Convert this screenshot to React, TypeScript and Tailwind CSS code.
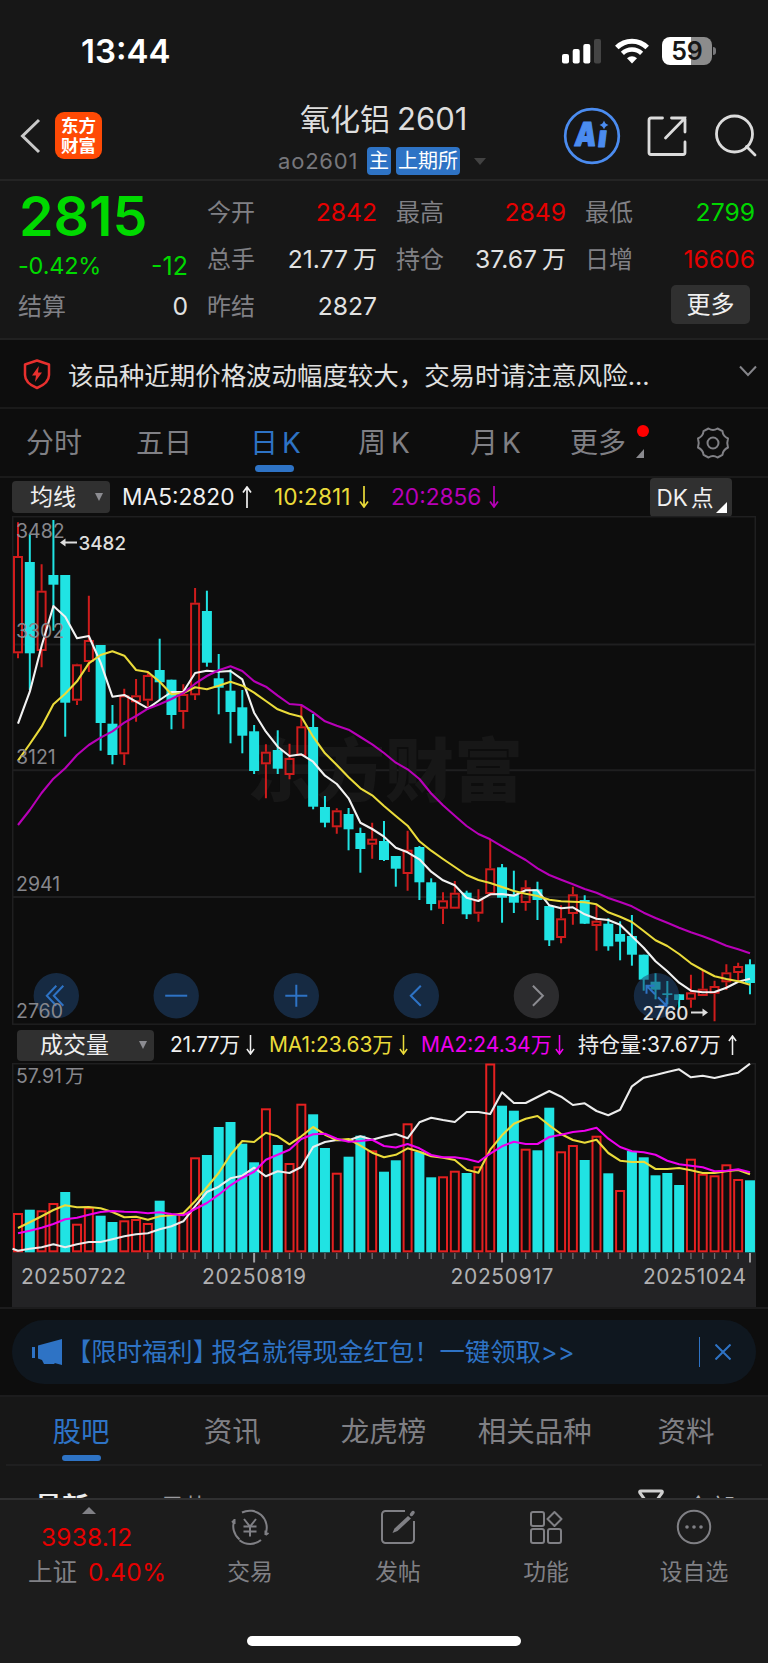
import type { ReactNode } from "react";
import { clsx } from "clsx";

// [rising, high, bodyTop, bodyBottom, low]
type Candle = [number, number, number, number, number];

const STEP = 11.806;
const FIRST_X = 6;
const VOLUME_BASE = 189.3;

const candles: Candle[] = [
  [1, 6.3, 40, 137.3, 142.3], [0, 18, 46, 137.3, 174], [1, 48.3, 74.7, 135, 151.3], [0, 4, 59, 68.7, 114.7],
  [0, 59, 59, 186.7, 220.7], [1, 147.7, 148.3, 184.7, 189], [1, 79.7, 124, 146, 156], [0, 129, 129, 207, 234.7],
  [0, 189, 207.7, 239, 248.3], [1, 172.7, 179.3, 238.3, 249], [1, 163, 179.3, 186.3, 205.7], [1, 155.7, 159, 184.7, 190.7],
  [0, 122.7, 154, 166.3, 184], [0, 163.7, 163.7, 199, 213.3], [1, 168.3, 178, 196, 212.7], [1, 72, 86.7, 179.3, 184],
  [0, 74.7, 95, 146.7, 150.7], [0, 138, 162.3, 171.7, 198.3], [0, 153.3, 174.7, 196, 227.3], [0, 174, 191.3, 219.7, 237.3],
  [0, 209, 215.3, 255, 258], [1, 228.3, 235.7, 248.3, 282.3], [0, 214.3, 234, 252.7, 258], [1, 227.7, 242, 259, 263.3],
  [1, 190, 210.3, 240, 240], [0, 198, 211, 290.7, 293.3], [0, 280, 291, 306.7, 311.3], [1, 292.3, 294.3, 311.3, 317.7],
  [0, 292, 298, 313.3, 334.3], [0, 311.7, 317, 333, 356.7], [1, 306.7, 322.7, 328.7, 342.7], [0, 305, 325, 344, 345],
  [0, 340, 340, 352.7, 370.7], [1, 314.7, 333.7, 358, 374.7], [0, 330, 331, 366.3, 384], [0, 362.3, 366.3, 388, 394.3],
  [1, 376.3, 384.3, 392.7, 408], [1, 365, 376.7, 392.7, 392.7], [0, 374.7, 376.7, 398.3, 403], [1, 373.3, 383.3, 397.7, 405.7],
  [1, 324, 352.3, 378, 379.7], [0, 348, 351.3, 381.7, 406.7], [0, 354.7, 378.3, 386.7, 397], [1, 364.3, 371.3, 387, 394.7],
  [0, 365.7, 373.3, 384, 404], [0, 389, 390, 424.3, 430], [1, 389.3, 402.3, 422, 427.3], [1, 370.7, 378.3, 398, 408.7],
  [0, 379.3, 384, 407.7, 408], [1, 388, 404.7, 410, 434.7], [0, 402.3, 407.7, 430.3, 434.7], [0, 405.3, 418, 425.7, 444.3],
  [0, 399, 420, 438.7, 449.7], [0, 438.7, 438.7, 463.7, 474.7], [0, 457.3, 465.7, 473.7, 483.3], [0, 465, 477.3, 479, 488.3],
  [0, 478.3, 478.3, 484, 493], [1, 458.7, 476.3, 483.7, 491.7], [1, 454.7, 472.7, 480, 480], [1, 464.7, 470, 477.7, 505.3],
  [1, 448.3, 456.3, 466.3, 474], [1, 446.7, 450, 457, 465], [0, 443.3, 448.3, 467, 478.3],
];

const ma5 = [
  207.7, 175.7, 130, 90, 100.7, 122.3, 120, 146.7, 180.7, 179, 185.7, 192.3, 184, 176, 175.7, 157, 154.7, 155.7, 155, 163.3,
  196.7, 215.7, 230.7, 240, 238.3, 245.7, 259.7, 268, 282.3, 306.7, 313, 320.7, 331.7, 336.3, 343.3, 355.7, 364.3, 369.3,
  381.7, 385, 378.3, 378, 379.7, 374.3, 374.3, 389.3, 392.3, 391.3, 398.3, 402.7, 404, 408.7, 420.3, 431.7, 445.3, 455.3,
  466.7, 474.7, 476.3, 476, 471.7, 465.7, 462.7,
];
const ma10 = [
  244.7, 228, 210.7, 188.3, 177.7, 165.3, 147.3, 139, 135.3, 139.7, 154, 156, 165.7, 178.3, 177, 171.3, 173.3, 169.7, 165.7,
  169.7, 176.7, 185, 193.3, 197.7, 200.7, 220.7, 237.3, 249, 261.3, 272.3, 279.3, 290, 300, 309.7, 325.3, 334.7, 343, 351,
  359, 364, 367, 371, 375, 377.7, 380, 383.7, 385.3, 385.7, 386.3, 388.3, 396.3, 400.7, 406, 415, 424.3, 430, 438, 447.3,
  454, 460.3, 463, 465.3, 468.7,
];
const ma20 = [
  309, 294, 277, 262.7, 252.3, 239, 229, 221.7, 215.3, 206.7, 200, 192.7, 188.3, 183, 177, 167.7, 160, 154.3, 150.3, 155,
  165.3, 170.7, 179.7, 188, 189, 196.3, 205.3, 209.7, 213.7, 221, 228.3, 237, 246.7, 253.3, 263, 277.5, 289.3, 299.7, 310,
  318, 323.3, 330.3, 337.3, 344, 352.3, 359, 363.7, 368.3, 373, 376.7, 382, 386, 390.3, 396.7, 402, 406.7, 411.7, 416.3,
  420.3, 424.7, 429.7, 433.3, 437.3,
];

const volumeTops = [
  150, 146.7, 147.3, 140, 129, 160.7, 144.3, 152.7, 159, 157.3, 156, 160, 137.7, 151.7, 150, 94.3, 92, 64, 59, 80.7, 99.3,
  45.3, 82, 100, 40.7, 51.3, 85, 109.7, 93.7, 72.7, 87.3, 108.7, 97.3, 60.3, 88.7, 114.3, 113.3, 107.7, 110, 103.3, 0.5,
  42.7, 47.7, 85.7, 87.3, 44.7, 88.3, 82, 97, 72.7, 110.3, 127, 88, 94.3, 112.3, 110, 122, 95.7, 110.7, 112.3, 101.3, 116,
  117.3,
];
const flatDays = [3, 51];

const volMa1 = [
  165, 159.3, 153.3, 147, 142.3, 144.3, 144, 145.3, 149, 154.3, 153.7, 156.7, 153.3, 152.3, 150.3, 138.3, 124.3, 110, 91.7,
  78, 79, 69.7, 73.3, 81.3, 73.3, 64, 71.7, 77, 76, 82.7, 89.7, 94.3, 91.8, 85.3, 88.7, 93.3, 94.7, 97, 106.7, 109.7, 86.7,
  72.3, 60.7, 55.7, 53, 62.3, 71, 77, 79.7, 76.7, 90, 97.7, 99, 98.7, 106, 106, 105, 107.3, 110, 110, 108.3, 107, 111.3,
];
const volMa2 = [
  170.3, 167.7, 164.7, 161, 156.3, 154.7, 151.7, 149, 148, 148.7, 149, 150.3, 149.3, 151, 152.3, 146, 140, 131.7, 122.3,
  114.7, 108.7, 96.7, 91.7, 86.7, 76, 71.3, 70.7, 75.7, 78.7, 78, 76.7, 83, 84.5, 81, 85.3, 92, 94.3, 94.3, 96, 99, 90.7,
  83.3, 78.7, 81, 81, 74, 71.7, 69, 67.7, 64.7, 75.7, 84, 88.3, 89.3, 91.7, 97.7, 101.3, 102.7, 104.3, 108.3, 107.7, 106.3,
  109.3,
];
const openInterest = [
  187.7, 185.7, 184.3, 181.3, 184.3, 181.3, 179, 179, 176.3, 173.3, 171.3, 170.3, 166.3, 163.3, 158.3, 143.3, 129, 123.7,
  115.3, 112.7, 104.7, 113.3, 108.3, 110, 104, 84, 79, 77, 77.3, 73.3, 76.7, 73.5, 71, 75.3, 59.3, 54.7, 57, 59, 49, 49,
  51, 29.3, 40, 40, 34, 28, 33.7, 42, 40.3, 48, 52.3, 46.7, 23.3, 14.7, 12, 9, 6.3, 14.3, 12.7, 15, 12.3, 9.7, 0.7,
];

const xAt = (i: number) => FIRST_X + i * STEP;
const toPoints = (values: number[]) => values.map((y, i) => `${xAt(i).toFixed(1)},${y}`).join(" ");

function StatusBar() {
  return (
    <div className="flex h-[90px] items-start justify-between pl-[81px] pr-[52px]">
      <span className="mt-[31px] text-[33px] font-semibold leading-[40px] text-white">13:44</span>
      <div className="mt-[37px] flex items-start">
        <svg width="40" height="26" className="mt-[1px]" viewBox="0 0 40 26">
          <rect x="0" y="16" width="7" height="9.5" rx="2" fill="#fff" />
          <rect x="10.7" y="11" width="7" height="14.5" rx="2" fill="#fff" />
          <rect x="21.3" y="6" width="7" height="19.5" rx="2" fill="#fff" />
          <rect x="32" y="1" width="7" height="24.5" rx="2" fill="#444" />
        </svg>
        <svg width="34" height="26" className="ml-[13px] mt-[1px]" viewBox="0 0 34 26" fill="none" stroke="#fff" strokeWidth="5">
          <path d="M1.8 9.6a21.5 21.5 0 0 1 30.4 0" />
          <path d="M7.4 15.4a13.6 13.6 0 0 1 19.2 0" strokeWidth="4.4" />
          <path d="M17 25.5l-5-5.2a7.2 7.2 0 0 1 10 0z" fill="#fff" stroke="none" />
        </svg>
        <div className="ml-[13px] flex h-7 w-[50px] items-center justify-center rounded-[8px] bg-[linear-gradient(to_right,#fff_58%,#8c8c8c_58%)] pt-[1px] text-[25px] font-semibold text-[#171717]">
          59
        </div>
        <div className="ml-[1px] mt-[10px] h-2 w-[3px] rounded-r-full bg-[#77777a]" />
      </div>
    </div>
  );
}

function Header() {
  return (
    <header className="flex h-[91px] border-b-2 border-[#242424]">
      <svg width="22" height="36" viewBox="0 0 22 36" className="ml-[19px] mt-[28px]" fill="none" stroke="#c9c9c9" strokeWidth="3">
        <path d="M20 2L3.5 18L20 34" />
      </svg>
      <div className="ml-[14px] mt-[22px] flex h-[47px] w-[47px] flex-col items-center justify-center rounded-[9px] bg-[#ff4a05] text-[17.5px] font-bold leading-[20px] text-white">
        <span>东方</span>
        <span>财富</span>
      </div>
      <div className="ml-[176px] w-[208px]">
        <h1 className="mt-[9px] whitespace-nowrap pl-[22px] text-[30px] leading-[40px] text-[#dedede]">
          氧化铝<span className="ml-[7px] text-[31px]">2601</span>
        </h1>
        <div className="mt-[8px] flex h-7 items-center text-[22px] text-[#77777c]">
          <span className="w-[89px] tracking-[0.8px]">ao2601</span>
          <span className="flex h-7 w-6 items-center justify-center rounded-[4px] bg-[#2e73c5] text-[20px] text-white">主</span>
          <span className="ml-[5px] flex h-7 w-16 items-center justify-center rounded-[4px] bg-[#2e73c5] text-[20px] text-white">
            上期所
          </span>
          <span className="ml-[14px] border-x-[6.5px] border-t-[7px] border-x-transparent border-t-[#424242]" />
        </div>
      </div>
      <svg width="58" height="58" viewBox="0 0 58 58" className="ml-[77px] mt-[17px]">
        <circle cx="29" cy="29" r="26.8" fill="none" stroke="#4b8cf0" strokeWidth="2.7" />
        <g fontWeight="900" fill="#4b8cf0" stroke="#4b8cf0" strokeLinejoin="round" transform="skewX(-7)">
          <text x="15.500" y="39.500" fontSize="33" strokeWidth="1.200" textLength="21.500" lengthAdjust="spacingAndGlyphs">A</text>
          <text x="39" y="40" fontSize="30" strokeWidth="1">ı</text>
        </g>
        <path d="M41 13.5q1 3.500 4.500 4.500q-3.500 1-4.500 4.500q-1-3.500-4.500-4.500q3.500-1 4.500-4.500z" fill="#4b8cf0" />
      </svg>
      <svg width="42" height="42" viewBox="0 0 42 42" className="ml-[25px] mt-[25px]" fill="none" stroke="#dcdcdc" strokeWidth="2.8" strokeLinecap="round">
        <path d="M16.500 3H5a2 2 0 0 0-2 2V37.500a2 2 0 0 0 2 2H37a2 2 0 0 0 2-2V27" />
        <path d="M25.500 3H39V17M39 3L19.500 23" />
      </svg>
      <svg width="44" height="44" viewBox="0 0 44 44" className="ml-[25px] mt-[24px]" fill="none" stroke="#dcdcdc" strokeWidth="2.8">
        <circle cx="21.500" cy="20" r="18" />
        <path d="M33.500 32.500L42 41" strokeLinecap="round" />
      </svg>
    </header>
  );
}

const quoteRows = [
  [["今开", "2842", "", "r"], ["最高", "2849", "", "r"], ["最低", "2799", "", "g"]],
  [["总手", "21.77", "万", "w"], ["持仓", "37.67", "万", "w"], ["日增", "16606", "", "r"]],
];

function QuoteCell({ label, value, unit, tone }: { label: string; value: string; unit?: string; tone: string }) {
  return (
    <div className="flex items-center justify-between whitespace-nowrap text-[24px]">
      <span className="ml-[-1px] text-[#808085]">{label}</span>
      <span
        className={clsx(
          "text-[24.700px]",
          tone === "r" && "text-[#e60000]",
          tone === "g" && "text-[#00d600]",
          tone === "w" && "text-[#e2e2e2]"
        )}
      >
        {value}
        {unit && <span className="ml-[5px] text-[24px]">{unit}</span>}
      </span>
    </div>
  );
}

function Quote() {
  return (
    <section className="grid h-[159px] grid-cols-4 grid-rows-[47px_47px_47px] gap-x-5 border-b-2 border-[#212121] pl-[19px] pr-[13px] pt-[8px]">
      <div className="row-span-2 text-[#00d900]">
        <div className="mt-[-1px] text-[55.500px] font-semibold leading-[56px]">2815</div>
        <div className="mt-[7px] flex items-center justify-between leading-[30px]">
          <span className="ml-[-1px] text-[23.500px] tracking-[-0.2px]">-0.42%</span>
          <span className="text-[25px]">-12</span>
        </div>
      </div>
      {quoteRows.flat().map(([label, value, unit, tone]) => (
        <QuoteCell key={label} label={label} value={value} unit={unit} tone={tone} />
      ))}
      <QuoteCell label="结算" value="0" tone="w" />
      <QuoteCell label="昨结" value="2827" tone="w" />
      <div />
      <div className="flex items-center justify-end pr-[5px]">
        <button className="mt-[-4px] h-[39px] w-[79px] rounded-[5px] bg-[#303030] text-[24px] text-[#f0f0f0]">更多</button>
      </div>
    </section>
  );
}

function Notice() {
  return (
    <section className="flex h-[69px] items-center border-b-2 border-[#1a1a1a] pl-[23px] pr-[11px]">
      <svg width="28" height="32" viewBox="0 0 28 32" fill="none" stroke="#e8302e" strokeWidth="2.500">
        <path d="M14 2.500L26 6.500V17c0 6-4.500 10-12 13C6.500 27 2 23 2 17V6.500z" strokeLinejoin="round" />
        <path d="M15.800 8L9 17.500h4L12 24l7-9.500h-4z" fill="#e8302e" stroke="none" />
      </svg>
      <p className="ml-[17px] mt-[6px] flex-1 whitespace-nowrap text-[25.450px] text-[#e0e0e0]">
        该品种近期价格波动幅度较大，交易时请注意风险...
      </p>
      <svg width="18" height="12" viewBox="0 0 18 12" className="mb-[5px]" fill="none" stroke="#85858a" strokeWidth="2">
        <path d="M1 1.500L9 10L17 1.500" />
      </svg>
    </section>
  );
}

function PeriodTabs() {
  return (
    <nav className="flex h-[69px] items-start border-b-2 border-[#1a1a1a] pt-[14px] text-[28px] leading-[40px] text-[#808085]">
      <span className="ml-[26px] w-[110px]">分时</span>
      <span className="w-[114px]">五日</span>
      <div className="w-[108px] text-[#2e73c5]">
        <div>
          日<span className="ml-1">K</span>
        </div>
        <div className="ml-[5px] mt-[2px] h-[7px] w-[39px] rounded-full bg-[#2e73c5]" />
      </div>
      <div className="w-[112px]">
        周<span className="ml-[5px]">K</span>
      </div>
      <div className="w-[100px]">
        月<span className="ml-1">K</span>
      </div>
      <span className="w-[57px]">更多</span>
      <div className="ml-[9px] flex flex-col items-center">
        <span className="mt-[2px] h-3 w-3 rounded-full bg-[#ff0000]" />
        <span className="mr-[6px] mt-[12px] border-b-[9px] border-l-[8px] border-b-[#8a8a8f] border-l-transparent" />
      </div>
      <svg width="34" height="34" viewBox="0 0 34 34" className="ml-[46px] mt-[3px]" fill="none" stroke="#808085" strokeWidth="2">
        <path d="M12.500 2.500Q17 5.500 21.500 2.500L26.500 5.200Q26.800 10 32 12.500Q30.500 17 32 21.500Q26.800 24 26.500 28.800L21.500 31.500Q17 28.500 12.500 31.500L7.500 28.800Q7.200 24 2 21.500Q3.500 17 2 12.500Q7.200 10 7.500 5.200Z" strokeLinejoin="round" />
        <circle cx="17" cy="17" r="5.500" />
      </svg>
    </nav>
  );
}

function LongArrow({ down, className }: { down?: boolean; className?: string }) {
  return (
    <svg viewBox="0 0 10 22" fill="none" stroke="currentColor" strokeWidth="1.700" className={clsx("shrink-0", className, down && "rotate-180")}>
      <path d="M5 22V1M1 6.500L5 1L9 6.500" />
    </svg>
  );
}

function MaBar() {
  return (
    <div className="flex h-[38px] items-center whitespace-nowrap text-[22.700px] leading-[30px]">
      <button className="ml-3 flex h-8 w-[98px] items-center rounded-[4px] bg-[#303030] pl-[18px] text-[23px] text-[#efefef]">
        均线
        <span className="ml-[19px] border-x-[4.500px] border-t-[8px] border-x-transparent border-t-[#8c8c91]" />
      </button>
      <div className="ml-[12px] flex w-[152px] items-center text-[#f0f0f0]">
        <span className="w-[120px]">MA5:2820</span>
        <LongArrow className="h-[22px] w-[10px]" />
      </div>
      <div className="flex w-[117px] items-center text-[#eadb3a]">
        <span className="w-[85px]">10:2811</span>
        <LongArrow down className="h-[22px] w-[10px]" />
      </div>
      <div className="flex w-[259px] items-center text-[#b800b8]">
        <span className="w-[98px]">20:2856</span>
        <LongArrow down className="h-[22px] w-[10px]" />
      </div>
      <button className="flex h-[39px] w-[82px] items-end rounded-[4px] bg-[#303030] pl-[4px] text-[22.500px] text-[#f0f0f0]">
        <span className="mb-[4px] w-[62px]">
          DK<span className="ml-[3px]">点</span>
        </span>
        <span className="mb-[4px] border-b-[11px] border-l-[11px] border-b-white border-l-transparent" />
      </button>
    </div>
  );
}

function RoundButton({ cx, muted, children }: { cx: number; muted?: boolean; children: ReactNode }) {
  return (
    <g transform={`translate(${cx} 479.700)`} fill="none" stroke={muted ? "#8c8c91" : "#2e73c5"} strokeWidth="2">
      <circle r="22.700" fill={muted ? "#3a3a3d" : "#1f4470"} fillOpacity={muted ? 0.7 : 0.55} stroke="none" />
      {children}
    </g>
  );
}

function PriceChart() {
  return (
    <svg width="744" height="509" viewBox="0 0 744 509" className="ml-3 block">
      <g fill="none" stroke="#1f1f20" strokeWidth="1.500">
        <rect x="0.700" y="0.700" width="742.600" height="507.500" />
        <path d="M0 128.500H743M0 254.300H743M0 381H743" strokeWidth="2" />
      </g>
      <text x="235" y="280" fontSize="69" fontWeight="900" fill="#171717">东方财富</text>
      {candles.map(([rising, high, top, bottom, low], i) => {
        const x = xAt(i);
        return rising ? (
          <g key={i} fill="none" stroke="#cf1c1c" strokeWidth="2">
            <path d={`M${x} ${high}V${top}M${x} ${bottom}V${low}`} />
            <rect x={x - 4} y={top + 1} width="8" height={Math.max(bottom - top - 2, 0.5)} />
          </g>
        ) : (
          <g key={i} fill="#20e3e3">
            <rect x={x - 1} y={high} width="2" height={low - high} />
            <rect x={x - 5} y={top} width="10" height={bottom - top} />
          </g>
        );
      })}
      <g fill="none" strokeWidth="2.100" strokeLinejoin="round">
        <polyline points={toPoints(ma5)} stroke="#f2f2f2" />
        <polyline points={toPoints(ma10)} stroke="#eadb3a" />
        <polyline points={toPoints(ma20)} stroke="#b800b8" />
      </g>
      <RoundButton cx={44.300}>
        <path d="M0 -10L-9.500 0L0 10M7 -10L-2.500 0L7 10" />
      </RoundButton>
      <RoundButton cx={164.200}>
        <path d="M-11 0H11" />
      </RoundButton>
      <RoundButton cx={284.300}>
        <path d="M-11 0H11M0 -11V11" />
      </RoundButton>
      <RoundButton cx={404.300}>
        <path d="M4.500 -10L-5.500 0L4.500 10" />
      </RoundButton>
      <RoundButton cx={524.400} muted>
        <path d="M-3.500 -10L6.500 0L-3.500 10" />
      </RoundButton>
      <RoundButton cx={644.500}>
        <path d="M-1.500 -1.500L-10 -10M-10 -2V-10H-2M1.500 1.500L10 10M10 2V10H2" />
      </RoundButton>
      <g fontSize="19.500" fill="#87878c">
        <text x="4" y="22">3482</text>
        <text x="4" y="121.500">3302</text>
        <text x="4" y="248">3121</text>
        <text x="4" y="375">2941</text>
        <text x="4" y="502">2760</text>
      </g>
      <g fontSize="18.800" fontWeight="500" fill="#dedede" stroke="none">
        <text x="66.500" y="33.500">3482</text>
        <path d="M48 26.500l5.500-4v3h11.500v2h-11.500v3z" />
        <text x="630.500" y="503.500">2760</text>
        <path d="M696 496.500l-5.500-4v3h-11.500v2h11.500v3z" />
      </g>
    </svg>
  );
}

function VolumeBar() {
  return (
    <div className="flex h-[38px] items-center whitespace-nowrap pt-[2px] text-[21px] leading-[30px]">
      <button className="ml-[17px] flex h-[31px] w-[137px] items-center rounded-[4px] bg-[#303030] pl-[23px] text-[23px] text-[#efefef]">
        成交量
        <span className="ml-[30px] border-x-[4.500px] border-t-[8px] border-x-transparent border-t-[#8c8c91]" />
      </button>
      <div className="ml-[16px] flex w-[99px] items-center text-[#efefef]">
        <span className="w-[76px] tracking-[-0.4px]">21.77万</span>
        <LongArrow down className="h-[20px] w-[9px]" />
      </div>
      <div className="flex w-[152px] items-center text-[#eadb3a]">
        <span className="w-[130px] tracking-[-0.1px]">MA1:23.63万</span>
        <LongArrow down className="h-[20px] w-[9px]" />
      </div>
      <div className="flex w-[157px] items-center text-[#ee00ee]">
        <span className="w-[134px]">MA2:24.34万</span>
        <LongArrow down className="h-[20px] w-[9px]" />
      </div>
      <div className="flex items-center text-[#efefef]">
        <span className="w-[150px]">持仓量:37.67万</span>
        <LongArrow className="h-[20px] w-[9px]" />
      </div>
    </div>
  );
}

function VolumeChart() {
  return (
    <svg width="744" height="244" viewBox="0 0 744 244" className="ml-3 block">
      <rect x="0.700" y="0.700" width="742.600" height="189" fill="none" stroke="#1f1f20" strokeWidth="1.500" />
      <rect x="0" y={VOLUME_BASE} width="744" height="55" fill="#232325" />
      {volumeTops.map((top, i) => {
        const rising = candles[i][0] === 1 || flatDays.includes(i);
        const h = VOLUME_BASE - top;
        return rising ? (
          <rect key={i} x={xAt(i) - 4} y={top + 1} width="8" height={h - 2} fill="none" stroke="#e52020" strokeWidth="2" />
        ) : (
          <rect key={i} x={xAt(i) - 5} y={top} width="10" height={h} fill="#20e3e3" />
        );
      })}
      <g fill="none" strokeWidth="2.100" strokeLinejoin="round">
        <polyline points={`0.500,185.700 ${toPoints(openInterest)}`} stroke="#ececec" />
        <polyline points={toPoints(volMa1)} stroke="#eadb3a" />
        <polyline points={toPoints(volMa2)} stroke="#ee00ee" />
      </g>
      {volumeTops.map((_, i) => {
        if (i < 11) return null;
        const major = i === 20 || i === 41 || i === 62;
        return <path key={i} d={`M${xAt(i)} 190V${major ? 199.5 : 196}`} stroke={major ? "#a0a0a3" : "#6c6c70"} strokeWidth={major ? 2 : 1.3} />;
      })}
      <text x="4" y="19.500" fontSize="19.500" fill="#87878c">
        57.91<tspan dx="3">万</tspan>
      </text>
      <g fontSize="21" fill="#b0b0b2">
        <text x="9" y="220.500" textLength="105">20250722</text>
        <text x="190" y="220.500" textLength="104">20250819</text>
        <text x="438.500" y="220.500" textLength="103">20250917</text>
        <text x="631" y="220.500" textLength="103">20251024</text>
      </g>
    </svg>
  );
}

function Banner() {
  return (
    <section className="h-[90px] border-y-2 border-[#1c1c1d] px-3 pt-[11px]">
      <div className="flex h-16 items-center rounded-[32px] bg-[#0f171f] pl-5 text-[#2e73c5]">
        <svg width="31" height="26" viewBox="0 0 31 26" fill="currentColor">
          <rect x="0" y="8" width="3" height="11" />
          <path d="M6 6.500L30 0V26L22.500 24V25H12L10 21L6 19.500z" />
        </svg>
        <p className="ml-[3px] flex-1 whitespace-nowrap text-[25.350px]">
          【限时福利<span className="mr-[6px] [font-feature-settings:'halt']">】</span>报名就得现金红包！一键领取&gt;&gt;
        </p>
        <span className="h-[30px] w-[1.500px] bg-[#2e73c5]" />
        <svg width="16" height="16" viewBox="0 0 16 16" className="ml-[15px] mr-[25px]" stroke="currentColor" strokeWidth="2">
          <path d="M0.500 0.500L15.500 15.500M15.500 0.500L0.500 15.500" />
        </svg>
      </div>
    </section>
  );
}

const communityTabs = ["股吧", "资讯", "龙虎榜", "相关品种", "资料"];

function Community() {
  return (
    <section className="h-[101px] overflow-hidden px-1.5">
      <nav className="grid h-[69px] grid-cols-5 border-b-2 border-[#1f1f20] pt-[15px] text-center text-[28.500px] leading-[40px] text-[#808085]">
        {communityTabs.map((tab, i) => (
          <div key={tab} className={clsx("ml-[-1px]", i === 0 && "text-[#2e73c5]")}>
            <div className="whitespace-nowrap">{tab}</div>
            {i === 0 && <div className="mx-auto mt-[3px] h-[6px] w-[39px] rounded-full bg-[#2e73c5]" />}
          </div>
        ))}
      </nav>
      <div className="flex pl-[29px] pt-[22px] leading-[40px]">
        <span className="w-[125px] text-[27px] font-bold text-[#ececec]">最新</span>
        <span className="w-[478px] text-[24.500px] text-[#9a9a9e]">最热</span>
        <svg width="26" height="28" viewBox="0 0 26 28" className="mt-[1px] shrink-0" fill="none" stroke="#cfcfcf" strokeWidth="3">
          <path d="M3 2H23Q25 2 24 4L16 15V26L10 22V15L2 4Q1 2 3 2z" />
        </svg>
        <span className="ml-[22px] text-[24.500px] text-[#b0b0b3]">全部</span>
      </div>
    </section>
  );
}

function NavItem({ label, children }: { label: string; children: ReactNode }) {
  return (
    <div className="flex flex-col items-center pt-[7px] text-[#808085]">
      <svg width="40" height="40" viewBox="0 0 40 40" fill="none" stroke="currentColor" strokeWidth="2">
        {children}
      </svg>
      <span className="mt-[9px] text-[22.800px] leading-[32px]">{label}</span>
    </div>
  );
}

function BottomBar() {
  return (
    <footer className="h-[165px] border-t-2 border-[#303031] bg-[#1c1c1c]">
      <div className="grid h-[136px] grid-cols-[176px_148px_148px_148px_148px]">
        <div className="text-[#e60000]">
          <div className="ml-[82px] mt-[7px] h-0 w-0 border-x-[7px] border-b-[7px] border-x-transparent border-b-[#808085]" />
          <div className="ml-[41px] mt-[6px] text-[24.500px] leading-[34px] tracking-[0.2px]">3938.12</div>
          <div className="ml-[28px] mt-[1px] flex whitespace-nowrap leading-[34px]">
            <span className="w-[60px] text-[24.500px] text-[#808085]">上证</span>
            <span className="text-[24.500px] tracking-[0.2px]">0.40%</span>
          </div>
        </div>
        <NavItem label="交易">
          <path d="M9.500 32.500A17 17 0 0 1 4.500 13M4.500 13L2 15.500M4.500 12V17M12 5.500A17 17 0 0 1 35.500 27M35.500 28V23.500M35.500 28L38.500 26M31 33A17 17 0 0 1 9.500 33.200" />
          <path d="M14 12L20 19.500L26 12M20 19.500V29.500M13.500 19.500H26.500M13.500 24.500H26.500" />
        </NavItem>
        <NavItem label="发帖">
          <path d="M27 4H7.500A3.500 3.500 0 0 0 4 7.500V32.500A3.500 3.500 0 0 0 7.500 36H32.500A3.500 3.500 0 0 0 36 32.500V14" />
          <path d="M33.500 7.500L35 5.500" strokeWidth="3.500" strokeLinecap="round" />
          <path d="M30 9L33 11.500L19.500 24L14.500 26L16.500 21.500z" fill="currentColor" stroke="none" />
        </NavItem>
        <NavItem label="功能">
          <rect x="5" y="5" width="13" height="14" rx="2" />
          <rect x="5" y="22" width="13" height="14" rx="2" />
          <rect x="22" y="22" width="13" height="14" rx="2" />
          <path d="M28.500 5L35.500 12L28.500 19L21.500 12z" strokeLinejoin="round" />
        </NavItem>
        <NavItem label="设自选">
          <circle cx="20" cy="20" r="16.200" />
          <g fill="currentColor" stroke="none">
            <circle cx="13" cy="20" r="1.800" />
            <circle cx="20" cy="20" r="1.800" />
            <circle cx="27" cy="20" r="1.800" />
          </g>
        </NavItem>
      </div>
      <div className="mx-auto h-[10px] w-[274px] rounded-full bg-white" />
    </footer>
  );
}

export default function App() {
  return (
    <div className="h-[1663px] w-[768px] overflow-hidden bg-[#171717] font-['Inter','Noto_Sans_CJK_SC',sans-serif]">
      <StatusBar />
      <Header />
      <Quote />
      <main className="bg-[#0d0d0d]">
        <Notice />
        <PeriodTabs />
        <MaBar />
        <PriceChart />
        <VolumeBar />
        <VolumeChart />
        <Banner />
      </main>
      <Community />
      <BottomBar />
    </div>
  );
}
